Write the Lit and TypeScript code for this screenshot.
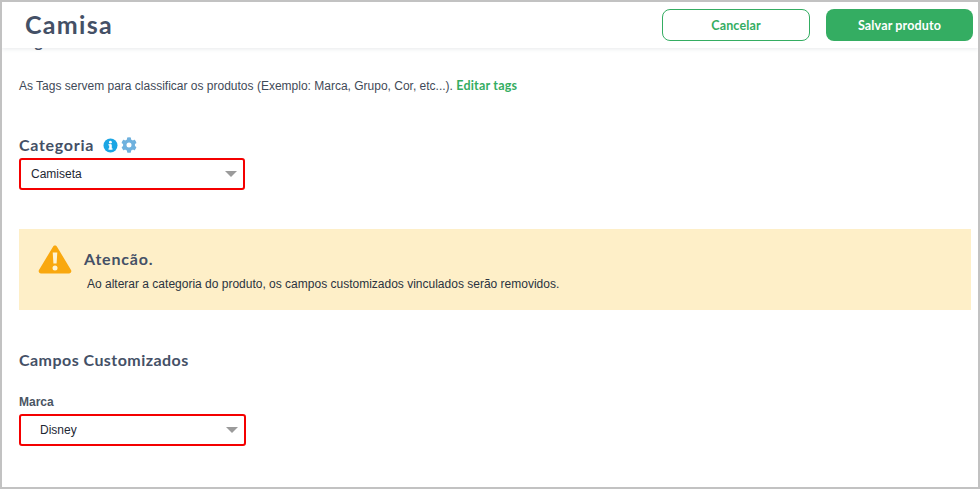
import { LitElement, html, css } from "lit";
import { customElement } from "lit/decorators.js";

const arrow = html`<svg class="arrow" width="12" height="6" viewBox="0 0 12 6"><path d="M0 0H12L6 6Z" fill="#9b9b9b"/></svg>`;

@customElement("app-root")
export class AppRoot extends LitElement {
  static styles = css`
    :host { display: block; width: 980px; height: 489px; box-sizing: border-box; border: 2px solid #c2c2c2; overflow: hidden; background: #fff; font-family: "Liberation Sans", Arial, sans-serif; color: #3a4552; position: relative; }
    .head { position: relative; z-index: 2; height: 46px; box-sizing: border-box; background: #fff; box-shadow: 0 1px 4px rgba(60,70,90,.12); display: flex; align-items: center; padding: 0 5px 0 23px; gap: 16px; }
    .title { font: 700 25px/1 Lato, sans-serif; color: #445066; letter-spacing: 1.3px; flex: 1; padding-bottom: 2px; }
    .btn { box-sizing: border-box; height: 32px; border-radius: 8px; display: flex; align-items: center; justify-content: center; font: 700 12.5px Lato, sans-serif; letter-spacing: .15px; }
    .ghost { width: 148px; border: 1px solid #34ad62; color: #34ad62; background: #fff; }
    .solid { width: 147px; background: #34ad62; color: #fff; }
    .content { padding: 0 7px 0 17px; margin-top: -17px; }
    .tagshead { font: 700 15.5px/20px Lato, sans-serif; color: #445066; height: 20px; }
    .hint { font-size: 12px; line-height: 16px; color: #3f4a58; margin-top: 27px; height: 16px; white-space: nowrap; }
    .hint b { font: 700 12.5px Lato, sans-serif; color: #34ad62; letter-spacing: .2px; }
    .labelrow { display: flex; align-items: center; gap: 9px; margin-top: 41px; height: 20px; }
    .label { font: 700 16px/20px Lato, sans-serif; color: #445066; letter-spacing: .7px; padding-bottom: 1px; }
    .icons { display: flex; align-items: center; gap: 3px; }
    .select { box-sizing: border-box; width: 226px; height: 32px; border: 2px solid #f40000; border-radius: 3px; display: flex; align-items: center; justify-content: space-between; padding: 0 6px 0 10px; font-size: 12px; color: #1d2733; background: #fff; margin-top: 3px; }
    .select.indent { padding-left: 19px; width: 227px; margin-top: 4px; }
    .arrow { display: block; }
    .alert { background: #feefc8; height: 81px; box-sizing: border-box; margin-top: 39px; display: flex; padding: 15px 0 0 19px; gap: 12px; }
    .alert h4 { margin: 0; font: 700 16px/20px Lato, sans-serif; color: #445066; letter-spacing: .8px; margin-top: 5px; }
    .alert p { margin: 7px 0 0 3px; font-size: 12px; line-height: 16px; color: #2a3340; }
    .section { font: 700 16px/20px Lato, sans-serif; color: #445066; letter-spacing: .45px; margin-top: 40px; }
    .field { font-size: 12px; font-weight: 700; line-height: 16px; color: #4a5563; margin-top: 24px; }
  `;
  render() {
    return html`
      <div class="head">
        <div class="title">Camisa</div>
        <div class="btn ghost">Cancelar</div>
        <div class="btn solid">Salvar produto</div>
      </div>
      <div class="content">
        <div class="tagshead">Tags</div>
        <div class="hint">As Tags servem para classificar os produtos (Exemplo: Marca, Grupo, Cor, etc...). <b>Editar tags</b></div>
        <div class="labelrow">
          <span class="label">Categoria</span>
          <span class="icons">
            <svg width="15" height="15" viewBox="0 0 15 15"><circle cx="7.500" cy="7.500" r="7" fill="#1ba6e4"/><rect x="6.200" y="6.400" width="2.600" height="5" fill="#fff"/><rect x="5.400" y="6.200" width="2.600" height="1.200" fill="#fff"/><rect x="5.400" y="10.400" width="4.200" height="1.200" fill="#fff"/><circle cx="7.400" cy="4.200" r="1.400" fill="#fff"/></svg>
            <svg width="16" height="16" viewBox="0 0 512 512"><path fill="#6fb1de" d="M487 316l-42-25a190 190 0 0 0 0-70l42-25c5-3 7-8 5-14-11-35-30-67-54-93-4-4-10-5-15-2l-42 25a187 187 0 0 0-61-35V28c0-6-4-11-9-12a220 220 0 0 0-108 0c-6 1-10 6-10 12v49a192 192 0 0 0-61 35L90 87c-5-3-11-2-15 2-24 26-43 58-54 93-2 6 0 11 5 14l42 25a190 190 0 0 0 0 70l-42 25c-5 3-7 8-5 14 11 35 30 67 54 93 4 4 10 5 15 2l42-25c18 15 38 27 61 35v49c0 6 4 11 10 12 37 8 74 8 108 0 5-1 9-6 9-12v-49c23-8 43-20 61-35l42 25c5 3 11 2 15-2 24-26 43-58 54-93 2-6 0-11-5-14zM256 336a80 80 0 1 1 0-160 80 80 0 0 1 0 160z"/></svg>
          </span>
        </div>
        <div class="select"><span>Camiseta</span>${arrow}</div>
        <div class="alert">
          <svg width="34" height="30" viewBox="0 0 34 30"><path d="M17 1.500c.9 0 1.600.5 2 1.200L33 26c.9 1.600-.1 3.500-2 3.500H3c-1.900 0-2.900-1.900-2-3.500L15 2.700c.4-.7 1.100-1.200 2-1.200z" fill="#f9a80f"/><path d="M14.700 8.500h4.600l-.7 11h-3.200z" fill="#fdf3d4"/><circle cx="17" cy="24" r="2.500" fill="#fdf3d4"/></svg>
          <div>
            <h4>Atencão.</h4>
            <p>Ao alterar a categoria do produto, os campos customizados vinculados serão removidos.</p>
          </div>
        </div>
        <div class="section">Campos Customizados</div>
        <div class="field">Marca</div>
        <div class="select indent"><span>Disney</span>${arrow}</div>
      </div>
    `;
  }
}
